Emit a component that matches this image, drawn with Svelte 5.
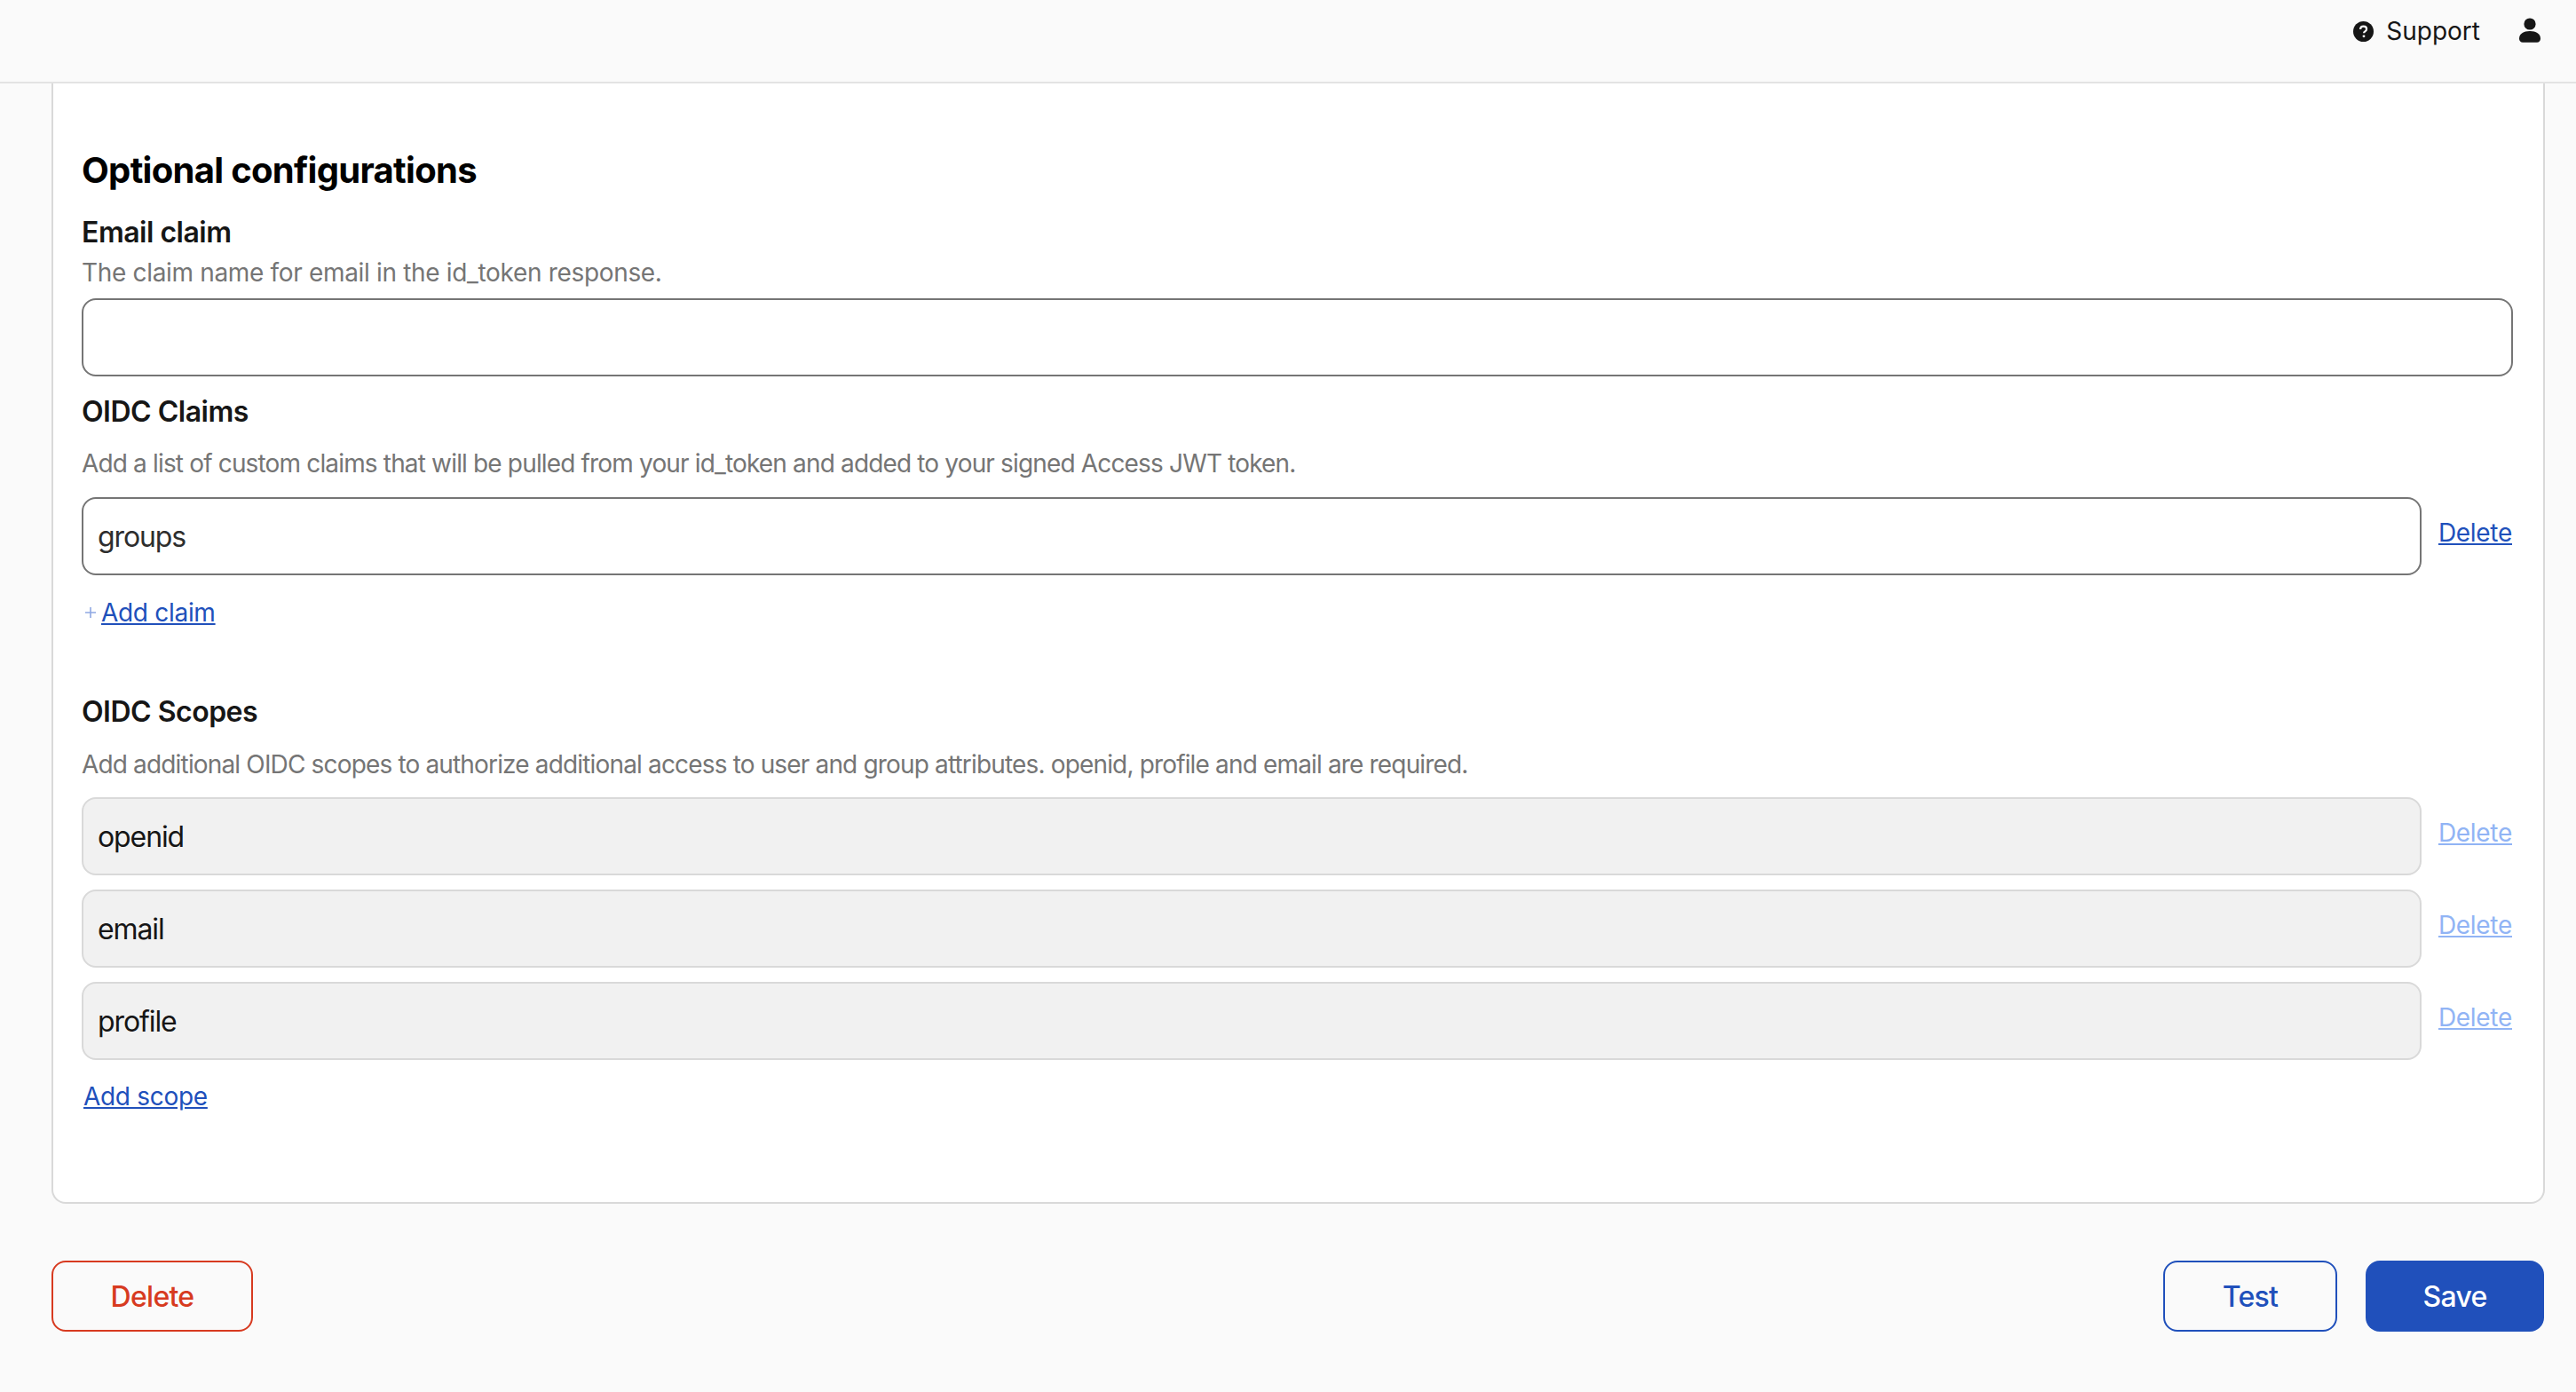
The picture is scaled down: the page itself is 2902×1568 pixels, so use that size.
<script>
    const scopes = ["openid", "email", "profile"];
</script>

<header class="topbar">
    <a class="support" href="#support">
        <svg class="help-icon" viewBox="0 0 24 24" aria-hidden="true">
            <circle cx="12" cy="12" r="12" fill="#161616" />
            <path d="M8.4 9.4c.1-2.2 1.7-3.5 3.7-3.5 2.1 0 3.6 1.3 3.6 3.1 0 1.4-.8 2.2-1.8 2.9-.9.6-1.3 1-1.3 2" fill="none" stroke="#fafafa" stroke-width="2.3" />
            <circle cx="12.5" cy="17.6" r="1.5" fill="#fafafa" />
        </svg>
        Support
    </a>
    <svg class="user-icon" viewBox="0 0 24 28" aria-hidden="true">
        <circle cx="12" cy="7" r="6.6" fill="#161616" />
        <path d="M0 23.5C0 18 5 15 12 15s12 3 12 8.5c0 2.6-1.6 4.2-4 4.2H4c-2.4 0-4-1.6-4-4.2z" fill="#161616" />
    </svg>
</header>

<main class="page">
    <section class="card">
        <h2>Optional configurations</h2>

        <h3 class="first">Email claim</h3>
        <p class="hint tight">The claim name for email in the id_token response.</p>
        <input class="field" type="text" />

        <h3 class="claims">OIDC Claims</h3>
        <p class="hint">Add a list of custom claims that will be pulled from your id_token and added to your signed Access JWT token.</p>
        <div class="row">
            <input class="field" type="text" value="groups" />
            <a class="link" href="#delete">Delete</a>
        </div>
        <div class="add add-claim">
            <svg class="plus" viewBox="0 0 12 12" aria-hidden="true">
                <path d="M6 0v12M0 6h12" stroke="#8fa8e3" stroke-width="1.6" fill="none" />
            </svg>
            <a class="link" href="#add-claim">Add claim</a>
        </div>

        <h3 class="scopes">OIDC Scopes</h3>
        <p class="hint">Add additional OIDC scopes to authorize additional access to user and group attributes. openid, profile and email are required.</p>
        <div class="rows">
            {#each scopes as scope}
                <div class="row">
                    <input class="field" type="text" value={scope} disabled />
                    <a class="link disabled" href="#delete">Delete</a>
                </div>
            {/each}
        </div>
        <div class="add add-scope">
            <a class="link" href="#add-scope">Add scope</a>
        </div>
    </section>

    <footer class="actions">
        <button class="btn danger">Delete</button>
        <div class="right">
            <button class="btn outline">Test</button>
            <button class="btn primary">Save</button>
        </div>
    </footer>
</main>

<style>
    :global(body) {
        background: #fafafa;
        font-family: Inter, "Liberation Sans", sans-serif;
        color: #161616;
    }

    .topbar {
        display: flex;
        justify-content: flex-end;
        align-items: flex-start;
        gap: 42px;
        padding: 20px 40px 0 0;
        height: 72px;
        border-bottom: 2px solid #e3e3e3;
    }

    .support {
        display: flex;
        align-items: center;
        gap: 14px;
        height: 30px;
        margin-right: 2px;
        font-size: 28px;
        color: #161616;
        text-decoration: none;
    }

    .help-icon {
        width: 23px;
        height: 23px;
    }

    .user-icon {
        width: 24px;
        height: 28px;
    }

    .page {
        padding: 0 35px 0 58px;
    }

    .card {
        display: flow-root;
        background: #fff;
        border: 2px solid #d9d9d9;
        border-top: none;
        border-radius: 0 0 16px 16px;
        padding: 74px 34px 101px 32px;
    }

    h2 {
        margin: 0;
        font-size: 40px;
        line-height: 48px;
        font-weight: 700;
        letter-spacing: -0.7px;
        color: #000;
    }

    h3 {
        margin: 0;
        font-size: 32px;
        line-height: 40px;
        font-weight: 600;
        letter-spacing: -0.5px;
        color: #161616;
    }

    h3.first { margin-top: 26px; }
    h3.claims { margin-top: 20px; }
    h3.scopes { margin-top: 74px; }

    .hint {
        margin: 21px 0 20px;
        font-size: 28px;
        letter-spacing: -0.84px;
        line-height: 36px;
        color: #757575;
    }

    .claims + .hint {
        margin-top: 20px;
    }

    .scopes + .hint {
        margin-bottom: 19px;
    }

    .hint.tight {
        margin: 7px 0 11px;
        letter-spacing: -0.33px;
    }

    .field {
        display: block;
        flex: 1;
        width: 100%;
        min-width: 0;
        height: 88px;
        box-sizing: border-box;
        padding: 0 16px;
        border: 2px solid #757575;
        border-radius: 16px;
        background: #fff;
        font-family: inherit;
        font-size: 32px;
        letter-spacing: -1.1px;
        color: #2e2e2e;
    }

    .field:disabled {
        background: #f1f1f1;
        border-color: #d9d9d9;
        color: #161616;
        opacity: 1;
    }

    .row {
        display: flex;
        gap: 19px;
        align-items: center;
        margin-right: 1px;
    }

    .rows {
        display: flex;
        flex-direction: column;
        gap: 16px;
    }

    .link {
        font-size: 28px;
        letter-spacing: -0.3px;
        line-height: 36px;
        color: #2050bb;
        text-decoration: underline;
        position: relative;
        top: -4px;
    }

    .link.disabled {
        color: #91b4f5;
    }

    .add {
        display: flex;
        align-items: center;
        gap: 6px;
        padding-left: 2px;
        height: 36px;
    }

    .add .link {
        top: 0;
    }

    .add-claim { margin-top: 24px; padding-left: 4px; }
    .add-scope { margin-top: 23px; }

    .plus {
        width: 12px;
        height: 12px;
    }

    .actions {
        display: flex;
        justify-content: space-between;
        margin-top: 64px;
        padding-right: 1px;
    }

    .right {
        display: flex;
        gap: 32px;
    }

    .btn {
        height: 80px;
        box-sizing: border-box;
        border-radius: 16px;
        font-family: inherit;
        font-size: 32px;
        letter-spacing: -0.7px;
        font-weight: 500;
        background: transparent;
    }

    .danger {
        width: 227px;
        border: 2px solid #d73a20;
        color: #d73a20;
    }

    .outline {
        width: 196px;
        border: 2px solid #2050bb;
        color: #2050bb;
    }

    .primary {
        width: 201px;
        border: none;
        background: #2050bb;
        color: #fff;
    }
</style>
